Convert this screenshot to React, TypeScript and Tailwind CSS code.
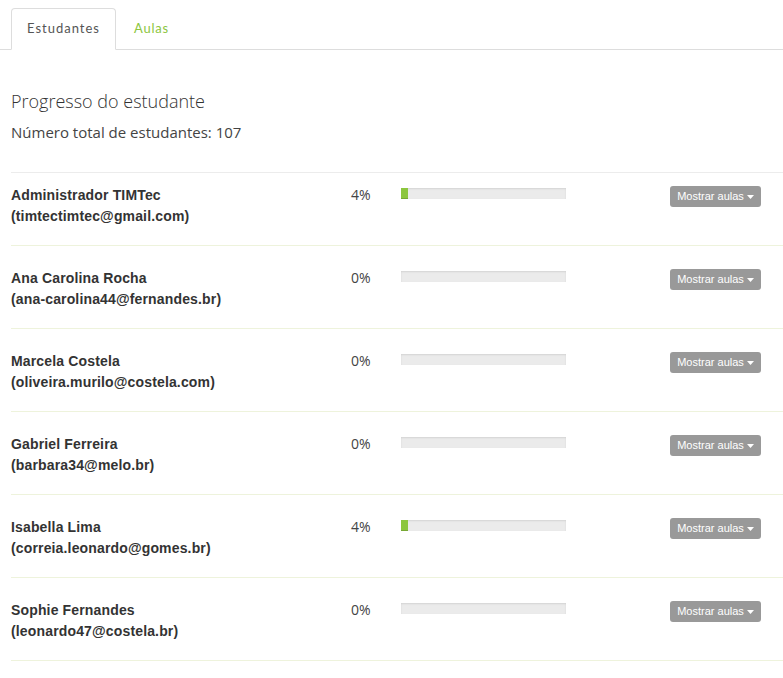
type Estudante = { nome: string; email: string; progresso: number };

const ESTUDANTES: Estudante[] = [
  { nome: 'Administrador TIMTec', email: 'timtectimtec@gmail.com', progresso: 4 },
  { nome: 'Ana Carolina Rocha', email: 'ana-carolina44@fernandes.br', progresso: 0 },
  { nome: 'Marcela Costela', email: 'oliveira.murilo@costela.com', progresso: 0 },
  { nome: 'Gabriel Ferreira', email: 'barbara34@melo.br', progresso: 0 },
  { nome: 'Isabella Lima', email: 'correia.leonardo@gomes.br', progresso: 4 },
  { nome: 'Sophie Fernandes', email: 'leonardo47@costela.br', progresso: 0 },
];

function LinhaEstudante({ estudante, primeira }: { estudante: Estudante; primeira: boolean }) {
  return (
    <div
      className={`flex items-start border-b border-[#eef3dc] ${primeira ? 'h-[73px] pt-[12px]' : 'h-[83px] pt-[22px]'}`}
    >
      <div className="w-[340px] font-['Liberation_Sans',Arial,sans-serif] text-[14px] font-bold leading-[21px] tracking-[0.15px] text-[#333]">
        <div>{estudante.nome}</div>
        <div>({estudante.email})</div>
      </div>
      <div className="w-[50px] font-['Open_Sans',sans-serif] text-[14px] leading-[20px] text-[#444]">
        {estudante.progresso}%
      </div>
      <div className="mt-[3px] h-[11px] w-[165px] overflow-hidden bg-[#ebebeb] shadow-[inset_0_1px_2px_rgba(0,0,0,0.1)]">
        <div
          className="h-full bg-[#8cc63e] shadow-[inset_0_-1px_0_rgba(0,0,0,0.15)]"
          style={{ width: estudante.progresso > 0 ? `${Math.max(estudante.progresso, 4)}%` : 0 }}
        />
      </div>
      <div className="ml-[104px] mt-[1px]">
        <button className="flex h-[21px] w-[91px] items-center justify-center gap-[3px] rounded-[3px] bg-[#999] font-['Liberation_Sans',Arial,sans-serif] text-[11px] text-white">
          Mostrar aulas
          <svg width="7" height="4" viewBox="0 0 7 4" className="mt-[1px]">
            <path d="M0 0h7L3.5 4z" fill="#fff" />
          </svg>
        </button>
      </div>
    </div>
  );
}

export default function App() {
  return (
    <div className="min-h-screen bg-white pt-[8px]">
      <div className="flex border-b border-[#ddd] pl-[11px]">
        <div className="-mb-px flex h-[42px] w-[105px] items-center justify-center rounded-t-[4px] border border-b-white border-[#ddd] bg-white font-['Lato',sans-serif] text-[13px] tracking-[1px] text-[#555]">
          Estudantes
        </div>
        <div className="flex h-[41px] items-center pl-[18px] font-['Lato',sans-serif] text-[13px] tracking-[0.8px] text-[#8cc63e]">
          Aulas
        </div>
      </div>

      <div className="pl-[11px]">
        <h2 className="mt-[39px] font-['Open_Sans',sans-serif] text-[18px] font-light leading-[24px] text-[#333]">
          Progresso do estudante
        </h2>
        <p className="mt-[9px] font-['Open_Sans',sans-serif] text-[15px] leading-[20px] text-[#444]">
          Número total de estudantes: 107
        </p>

        <div className="mt-[30px] border-t border-[#ececec]">
          {ESTUDANTES.map((e, i) => (
            <LinhaEstudante key={e.email} estudante={e} primeira={i === 0} />
          ))}
        </div>
      </div>
    </div>
  );
}
